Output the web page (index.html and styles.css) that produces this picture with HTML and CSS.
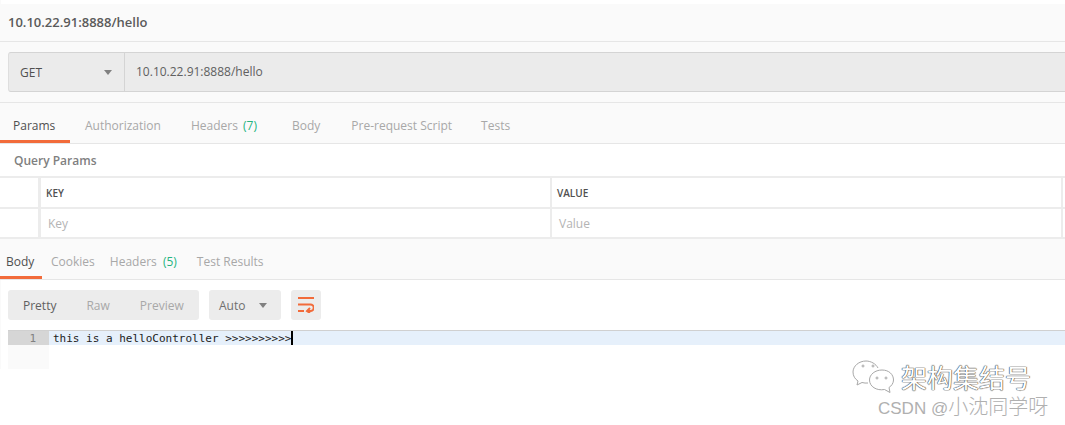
FILE: index.html
```html
<!DOCTYPE html>
<html lang="en">
<head>
<meta charset="utf-8">
<title>Request</title>
<link rel="stylesheet" href="styles.css">
</head>
<body>
<div class="app">
  <header class="title">10.10.22.91:8888/hello</header>
  <section class="urlwrap">
    <div class="urlbar">
      <div class="method"><span>GET</span><i class="caret"></i></div>
      <div class="url">10.10.22.91:8888/hello</div>
    </div>
  </section>
  <nav class="tabs reqtabs">
    <span class="tab active">Params</span>
    <span class="tab">Authorization</span>
    <span class="tab hdr">Headers <em>(7)</em></span>
    <span class="tab bodytab">Body</span>
    <span class="tab prs">Pre-request Script</span>
    <span class="tab">Tests</span>
  </nav>
  <div class="qp">Query Params</div>
  <div class="row head">
    <div class="c0"></div>
    <div class="c1">KEY</div>
    <div class="c2">VALUE</div>
    <div class="c3"></div>
  </div>
  <div class="row body">
    <div class="c0"></div>
    <div class="c1">Key</div>
    <div class="c2">Value</div>
    <div class="c3"></div>
  </div>
  <nav class="tabs restabs">
    <span class="tab active">Body</span>
    <span class="tab">Cookies</span>
    <span class="tab hdr">Headers <em>(5)</em></span>
    <span class="tab">Test Results</span>
  </nav>
  <div class="toolbar">
    <div class="seg"><span class="on">Pretty</span><span>Raw</span><span>Preview</span></div>
    <div class="auto"><span>Auto</span><i class="caret"></i></div>
    <div class="wrapbtn">
      <svg width="16" height="16" viewBox="0 0 16 16" fill="none" stroke="#f26b3a" stroke-width="2">
        <path d="M0 1h16"/>
        <path d="M0 7.500h12.500a3 3 0 0 1 0 6.500H9"/>
        <path d="M0 14h6"/>
        <path d="M12 11l-3 3 3 2"/>
      </svg>
    </div>
  </div>
  <div class="editor">
    <div class="gutter"><div class="num">1</div></div>
    <div class="code"><div class="line">this is a helloController &gt;&gt;&gt;&gt;&gt;&gt;&gt;&gt;&gt;&gt;<b class="cursor"></b></div></div>
  </div>
</div>
<div class="mark">
  <div class="mark1">
    <svg width="42" height="35" viewBox="0 0 42 35" fill="none" stroke="#a8a8a8" stroke-width="1">
      <path d="M26 8C24 4 19 1 14 1 7 1 1 6 1 12c0 4 2 7 5 9l-1 4 5-2.500c2 .5 4 .8 6 .5"/>
      <circle cx="11" cy="6" r="1"/><circle cx="21" cy="6" r="1"/>
      <path d="M30 10c7 0 11.500 4.500 11.500 10 0 3-2 6-4.500 7.500l1 5-5.500-3c-8 1.500-15-3-15-9.500 0-5.500 5.500-10 12.500-10z"/>
      <circle cx="25" cy="18" r="1"/><circle cx="34" cy="18" r="1"/>
    </svg>
    <span>架构集结号</span>
  </div>
  <div class="mark2">CSDN @<span>小沈同学呀</span></div>
</div>
</body>
</html>
```
FILE: styles.css
```css
* { box-sizing: border-box; }
html, body { margin: 0; padding: 0; background: #fff; }
body {
  width: 1065px;
  height: 425px;
  overflow: hidden;
  position: relative;
  font-family: "Open Sans", "Noto Sans", sans-serif;
  font-size: 12px;
  color: #808080;
}
.app { padding-top: 4px; height: 369px; box-shadow: inset 1px 0 #fafafa; }
.title {
  height: 38px;
  background: #fafafa;
  border-bottom: 1px solid #e6e6e6;
  padding-left: 8px;
  line-height: 37px;
  font-size: 13px;
  font-weight: 600;
  color: #5a5a5a;
}
.urlwrap {
  height: 61px;
  background: #fafafa;
  border-bottom: 1px solid #e6e6e6;
  padding: 10px 0 0 8px;
}
.urlbar {
  display: flex;
  height: 40px;
  background: #ebebeb;
  border: 1px solid #d4d4d4;
  border-right: 0;
  border-left-color: #dedede;
  border-radius: 3px 0 0 3px;
}
.method {
  width: 116px;
  flex: none;
  display: flex;
  align-items: center;
  justify-content: space-between;
  padding: 0 12px 0 11px;
  border-right: 1px solid #d4d4d4;
  font-size: 12px;
  font-weight: 500;
  color: #505050;
}
.caret {
  display: block;
  width: 0;
  height: 0;
  border-left: 4px solid transparent;
  border-right: 4px solid transparent;
  border-top: 5px solid #808080;
}
.url { padding-left: 11px; line-height: 38px; color: #606060; }
.tabs { display: flex; background: #fafafa; border-bottom: 1px solid #e6e6e6; }
.tab { display: block; color: #a8a8a8; white-space: nowrap; }
.tab em { font-style: normal; color: #26b47f; margin-left: 2px; }
.tab.active { color: #505050; border-bottom: 3px solid #f26b3a; }
.reqtabs { height: 41px; padding-top: 13px; gap: 30px; padding-left: 0; }
.reqtabs .tab { height: 27px; line-height: 19px; }
.reqtabs .tab.active { width: 70px; padding-left: 13px; margin-right: -15px; line-height: 19px; }
.reqtabs .hdr { margin-right: 5px; }
.reqtabs .bodytab { margin-right: 1px; }
.reqtabs .prs { margin-right: -1px; }
.qp {
  height: 32px;
  background: #fff;
  padding-left: 14px;
  line-height: 33px;
  font-weight: 600;
  color: #808080;
}
.row { display: flex; background: #fff; }
.row > div { flex: none; }
.c0 { border-right: 3px solid #ececec; width: 41px; }
.c1 { width: 509px; }
.c2 { width: 511px; border-left: 2px solid #ececec; }
.c3 { width: 4px; border-left: 2px solid #ececec; }
.head {
  height: 33px;
  border-top: 2px solid #ececec;
  border-bottom: 2px solid #ececec;
  font-size: 10px;
  font-weight: 600;
  line-height: 30px;
  color: #505050;
}
.head .c1 { padding-left: 5px; }
.head .c2 { padding-left: 5px; }
.body {
  height: 30px;
  border-bottom: 2px solid #ececec;
  line-height: 30px;
  color: #b4b4b4;
}
.body .c1 { padding-left: 7px; }
.body .c2 { padding-left: 7px; }
.restabs { height: 41px; padding: 13px 0 0 0; gap: 17px; }
.restabs .tab { height: 27px; line-height: 19px; }
.restabs .tab.active { width: 42px; padding-left: 6px; margin-right: -8px; }
.restabs .tab:nth-child(2) { margin-right: -2px; }
.restabs .hdr em { margin-left: 3px; }
.restabs .hdr { margin-right: 3px; }
.toolbar { display: flex; padding: 10px 0 0 8px; height: 50px; gap: 10px; }
.seg, .auto, .wrapbtn {
  height: 30px;
  background: #ececec;
  border-radius: 3px;
  display: flex;
  align-items: center;
}
.seg { width: 191px; padding-left: 15px; gap: 30px; color: #a8a8a8; }
.seg .on { color: #606060; }
.auto { width: 72px; padding: 0 14px 0 10px; justify-content: space-between; color: #707070; }
.wrapbtn { width: 30px; justify-content: center; }
.editor {
  display: flex;
  height: 39px;
  margin-left: 8px;
  border-top: 1px solid #d0d0d0;
  font-family: "DejaVu Sans Mono", "Liberation Mono", monospace;
  font-size: 11px;
}
.gutter { width: 41px; flex: none; background: #fafafa; }
.num {
  height: 14px;
  background: #d6d6d6;
  color: #808080;
  text-align: right;
  padding-right: 13px;
  line-height: 15px;
}
.code { flex: 1; }
.line {
  height: 14px;
  background: #e6f0fb;
  padding-left: 4px;
  line-height: 15px;
  color: #222;
  white-space: pre;
}
.cursor {
  display: inline-block;
  width: 2px;
  height: 14px;
  background: #000;
  vertical-align: top;
}
.mark {
  position: absolute;
  left: 852px;
  top: 360px;
  color: #aaa;
  font-family: "Noto Sans CJK SC", "Liberation Sans", sans-serif;
}
.mark1 { display: flex; gap: 7px; height: 35px; }
.mark1 svg { flex: none; }
.mark1 span {
  font-size: 26px;
  color: #fff;
  line-height: 34px;
  height: 35px;
  text-shadow: 0 0 1px #444, 0 0 1px #444, 0 0 1px #444;
}
.mark2 {
  margin-left: 26px;
  font-family: "Liberation Sans", "Noto Sans CJK SC", sans-serif;
  font-size: 17px;
  line-height: 22px;
  color: #b0b0b0;
  white-space: nowrap;
}
.mark2 span { font-size: 20px; font-family: "Noto Sans CJK SC", sans-serif; font-weight: 300; }
```
